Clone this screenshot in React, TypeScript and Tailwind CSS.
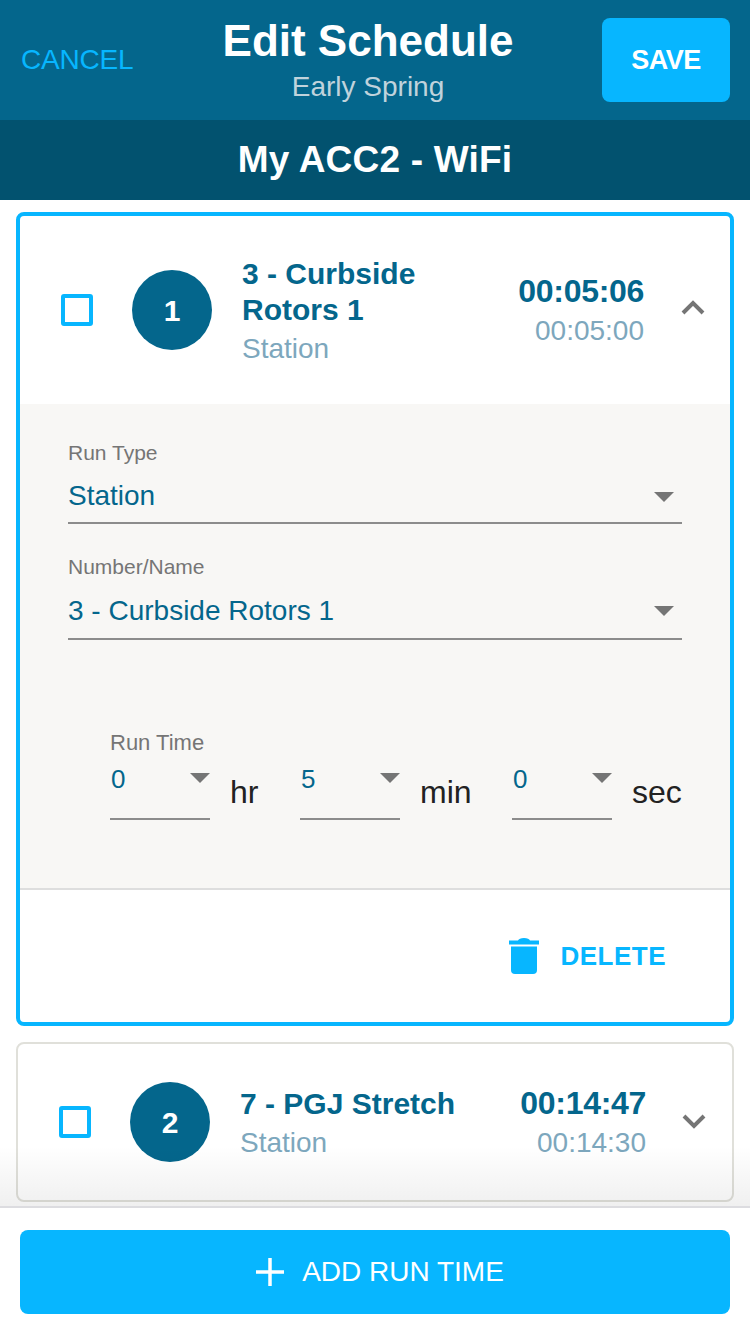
const FONT = "font-['Liberation_Sans',Arial,sans-serif]";

function Caret() {
  return <div className="w-0 h-0 border-l-[10px] border-r-[10px] border-t-[10px] border-l-transparent border-r-transparent border-t-[#757575]" />;
}

function Chevron({ up }: { up?: boolean }) {
  return (
    <svg width="24" height="16" viewBox="0 0 24 16" fill="none" stroke="#757575" strokeWidth="4">
      <path d={up ? "M2 14 L12 4 L22 14" : "M2 2 L12 12 L22 2"} />
    </svg>
  );
}

function Checkbox() {
  return <div className="w-8 h-8 rounded-[3px] border-[4px] border-[#07b6ff] bg-white shrink-0" />;
}

function Badge({ n }: { n: number }) {
  return (
    <div className="w-20 h-20 rounded-full bg-[#04668c] text-white font-bold text-[30px] flex items-center justify-center shrink-0">
      {n}
    </div>
  );
}

function FormSelect({ label, value, rowClass, caretClass }: { label: string; value: string; rowClass: string; caretClass: string }) {
  return (
    <div className="flex flex-col">
      <div className="text-[21px] leading-6 text-[#757575]">{label}</div>
      <div className={`flex items-center justify-between border-b-2 border-[#8c8c8c] pr-2 ${rowClass}`}>
        <span className="text-[28px] text-[#04668c] leading-8">{value}</span>
        <div className={caretClass}><Caret /></div>
      </div>
    </div>
  );
}

function TimeSelect({ value, unit, unitWidth }: { value: string; unit: string; unitWidth: string }) {
  return (
    <div className="flex items-end">
      <div className="w-[100px] h-[71px] border-b-2 border-[#8c8c8c] flex items-start justify-between pl-[1px]">
        <span className="text-[26px] leading-[30px] text-[#04668c] mt-[15px]">{value}</span>
        <div className="mt-[24px]"><Caret /></div>
      </div>
      <span className={`text-[32px] leading-9 text-[#222222] ml-[20px] mb-[10px] ${unitWidth}`}>{unit}</span>
    </div>
  );
}

export default function App() {
  return (
    <div className={`${FONT} w-[750px] h-[1334px] flex flex-col bg-white overflow-hidden`}>
      <div className="h-[120px] bg-[#04668c] flex items-center pl-[21px] pr-[20px] shrink-0">
        <div className="w-[202px] text-[28px] text-[#07b6ff] tracking-[-0.2px]">CANCEL</div>
        <div className="w-[290px] self-start pt-[18px] flex flex-col items-center whitespace-nowrap">
          <div className="text-[44px] leading-[46px] font-bold text-white">Edit Schedule</div>
          <div className="mt-[4px] text-[28px] leading-[38px] text-[#c0d3dc]">Early Spring</div>
        </div>
        <div className="ml-auto w-[128px] h-[84px] rounded-[8px] bg-[#07b6ff] text-white font-bold text-[27px] tracking-[-0.5px] flex items-center justify-center">
          SAVE
        </div>
      </div>
      <div className="h-[80px] bg-[#02526f] flex items-center justify-center text-white font-bold text-[37px] tracking-[0.2px] shrink-0">
        My ACC2 - WiFi
      </div>

      <div className="flex-1 relative overflow-hidden pt-[12px] px-[16px] flex flex-col gap-[16px]">
        <div className="h-[814px] shrink-0 rounded-[8px] border-[4px] border-[#07b6ff] bg-white flex flex-col overflow-hidden">
          <div className="h-[188px] flex items-center pl-[41px] shrink-0">
            <Checkbox />
            <div className="ml-[39px]"><Badge n={1} /></div>
            <div className="ml-[30px] w-[250px] mt-[4px]">
              <div className="text-[30px] leading-[36px] font-bold text-[#04668c]">3 - Curbside<br />Rotors 1</div>
              <div className="mt-[2px] text-[28px] leading-[38px] text-[#7da7bd]">Station</div>
            </div>
            <div className="w-[152px] text-right -mt-[3px]">
              <div className="text-[32px] leading-[44px] font-bold text-[#04668c] tracking-[-0.3px]">00:05:06</div>
              <div className="text-[28px] leading-[36px] text-[#7da7bd]">00:05:00</div>
            </div>
            <div className="ml-[37px] -mt-[6px]"><Chevron up /></div>
          </div>

          <div className="h-[486px] bg-[#f8f7f5] border-b-2 border-[#dedede] pt-[37px] pl-[48px] pr-[48px] shrink-0">
            <div className="flex flex-col gap-[31px]">
              <FormSelect label="Run Type" value="Station" rowClass="h-[59px] pt-[4px]" caretClass="mt-[2px]" />
              <FormSelect label="Number/Name" value="3 - Curbside Rotors 1" rowClass="h-[61px] pt-[5px]" caretClass="mt-[0px]" />
            </div>
            <div className="mt-[91px] pl-[42px]">
              <div className="text-[22px] leading-6 text-[#757575]">Run Time</div>
              <div className="flex -mt-[6px]">
                <TimeSelect value="0" unit="hr" unitWidth="w-[70px]" />
                <TimeSelect value="5" unit="min" unitWidth="w-[92px]" />
                <TimeSelect value="0" unit="sec" unitWidth="" />
              </div>
            </div>
          </div>

          <div className="flex-1 flex items-center justify-end pr-[64px]">
            <svg width="30" height="36" viewBox="0 0 30 36" fill="#07b6ff">
              <path d="M0 2.5 H9 Q10 0 15 0 Q20 0 21 2.5 H30 V6.5 H0 Z" />
              <path d="M2 8.5 H28 V32 Q28 36 24 36 H6 Q2 36 2 32 Z" />
            </svg>
            <span className="ml-[21px] text-[26px] font-bold tracking-[0.5px] text-[#07b6ff]">DELETE</span>
          </div>
        </div>

        <div className="h-[160px] shrink-0 rounded-[8px] border-2 border-[#e0e0da] bg-white flex items-center pl-[41px]">
          <Checkbox />
          <div className="ml-[39px]"><Badge n={2} /></div>
          <div className="ml-[30px] w-[252px] mt-[2px]">
            <div className="text-[30px] leading-[37px] font-bold text-[#04668c]">7 - PGJ Stretch</div>
            <div className="text-[28px] leading-[38px] mt-[2px] text-[#7da7bd]">Station</div>
          </div>
          <div className="w-[154px] text-right -mt-[2px]">
            <div className="text-[32px] leading-[44px] font-bold text-[#04668c] tracking-[-0.3px]">00:14:47</div>
            <div className="text-[28px] leading-[36px] text-[#7da7bd]">00:14:30</div>
          </div>
          <div className="ml-[36px]"><Chevron /></div>
        </div>

        <div className="absolute left-0 right-0 bottom-0 h-[60px] bg-gradient-to-b from-transparent to-black/[0.06]" />
      </div>

      <div className="h-[128px] shrink-0 bg-white border-t-[2px] border-[#dcdce0] pt-[22px] px-[20px]">
        <div className="h-[84px] rounded-[8px] bg-[#07b6ff] text-white text-[28px] flex items-center justify-center pl-[9px]">
          <svg width="30" height="30" viewBox="0 0 30 30" stroke="#ffffff" strokeWidth="3.5">
            <path d="M15 1 V29 M1 15 H29" />
          </svg>
          <span className="ml-[17px]">ADD RUN TIME</span>
        </div>
      </div>
    </div>
  );
}
